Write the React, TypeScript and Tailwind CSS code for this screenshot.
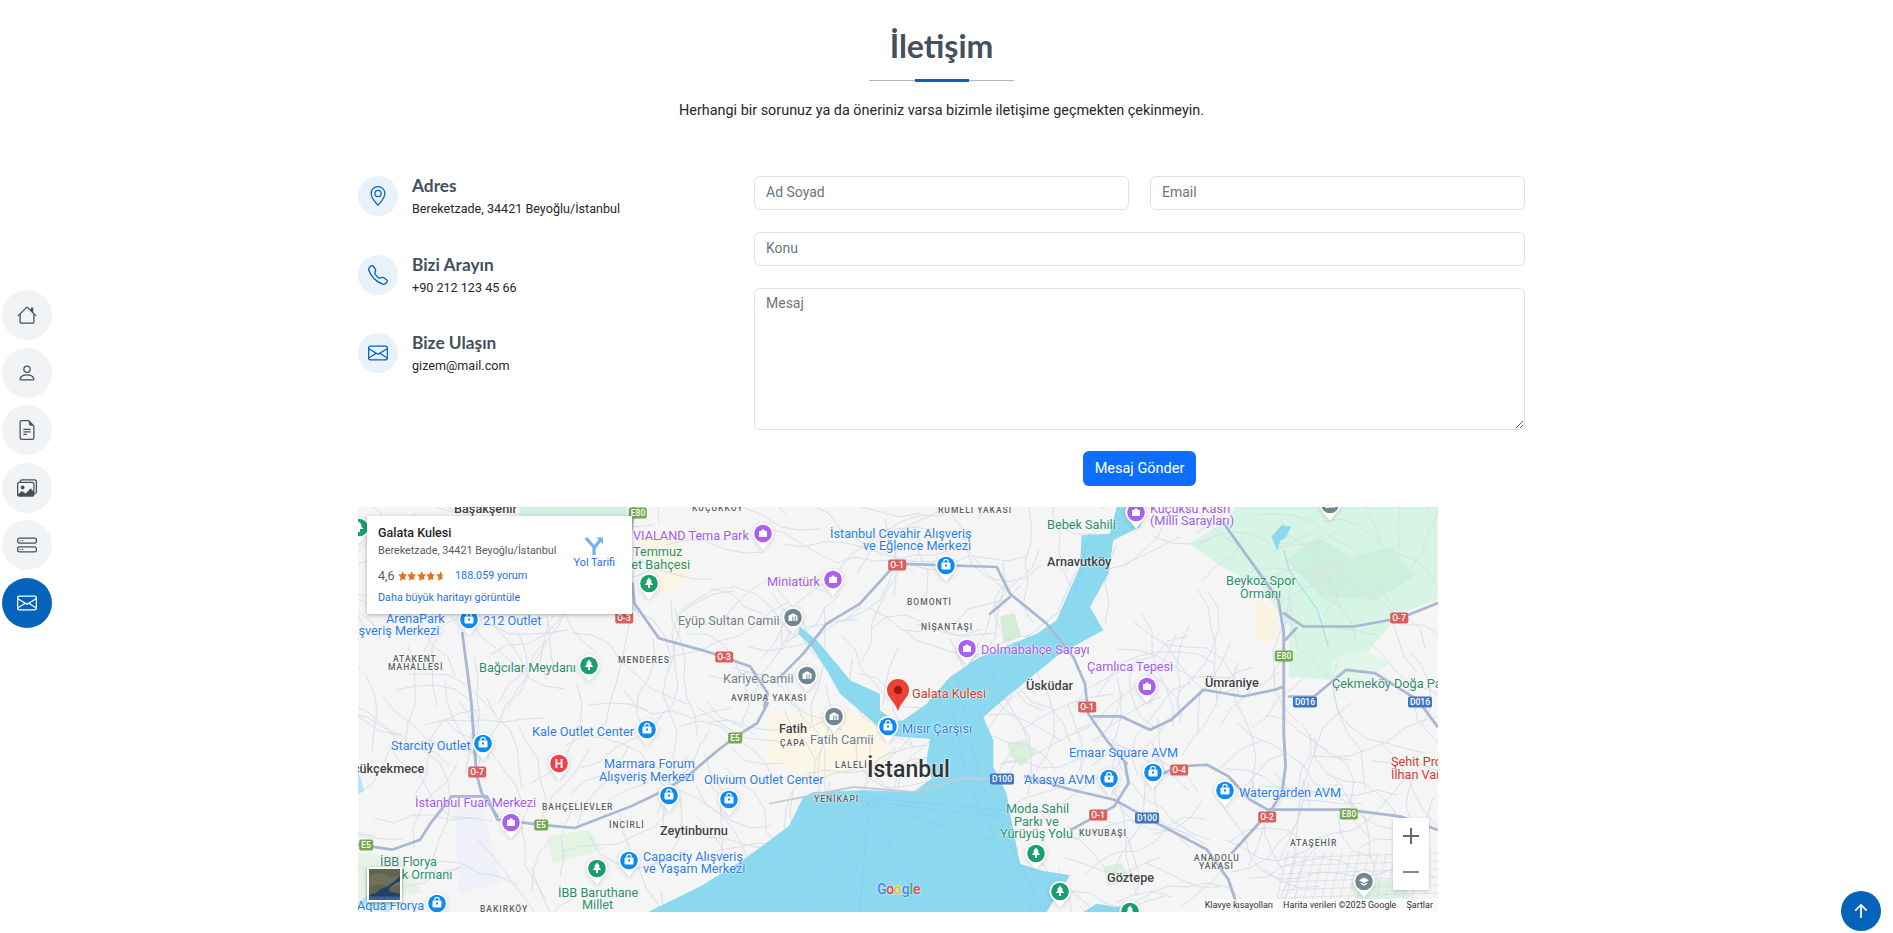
import React from 'react';
import {
  BsHouse, BsPerson, BsFileEarmarkText, BsImages, BsHddStack, BsEnvelope,
  BsGeoAlt, BsTelephone, BsArrowUpShort,
} from 'react-icons/bs';

const NAV = [
  { icon: BsHouse },
  { icon: BsPerson },
  { icon: BsFileEarmarkText },
  { icon: BsImages },
  { icon: BsHddStack },
  { icon: BsEnvelope, active: true },
];

const INFO = [
  { icon: BsGeoAlt, title: 'Adres', text: 'Bereketzade, 34421 Beyoğlu/İstanbul' },
  { icon: BsTelephone, title: 'Bizi Arayın', text: '+90 212 123 45 66' },
  { icon: BsEnvelope, title: 'Bize Ulaşın', text: 'gizem@mail.com' },
];

type Kind = 'blue' | 'purple' | 'green' | 'gray' | 'red' | 'dark' | 'small' | 'city';

const KIND_CLASS: Record<Kind, string> = {
  blue: 'text-[12.7px] text-[#2a7de9]',
  purple: 'text-[12.7px] text-[#a25ce6]',
  green: 'text-[12.7px] text-[#2c8f68]',
  gray: 'text-[12.7px] text-[#6d7f88]',
  red: 'text-[12.7px] text-[#d9352c]',
  dark: 'text-[12.7px] font-medium text-[#3f4245]',
  small: 'text-[8.5px] font-medium tracking-[1px] text-[#5a5f63]',
  city: 'text-[23px] font-medium text-[#303236]',
};

const LABELS: [number, number, string, Kind][] = [
  [96, 2, 'Başakşehir', 'dark'],
  [334, 1, 'KÜÇÜKKÖY', 'small'],
  [275, 29, 'VIALAND Tema Park', 'purple'],
  [275, 45, 'Temmuz', 'green'],
  [253, 58, 'Millet Bahçesi', 'green'],
  [409, 75, 'Miniatürk', 'purple'],
  [28, 112, 'ArenaPark', 'blue'],
  [-14, 124, 'Alışveriş Merkezi', 'blue'],
  [125, 114, '212 Outlet', 'blue'],
  [320, 114, 'Eyüp Sultan Camii', 'gray'],
  [35, 152, 'ATAKENT', 'small'],
  [30, 160, 'MAHALLESİ', 'small'],
  [260, 153, 'MENDERES', 'small'],
  [121, 161, 'Bağcılar Meydanı', 'green'],
  [365, 172, 'Kariye Camii', 'gray'],
  [373, 191, 'AVRUPA YAKASI', 'small'],
  [174, 225, 'Kale Outlet Center', 'blue'],
  [33, 239, 'Starcity Outlet', 'blue'],
  [-20, 262, 'Küçükçekmece', 'dark'],
  [421, 222, 'Fatih', 'dark'],
  [422, 236, 'ÇAPA', 'small'],
  [452, 233, 'Fatih Camii', 'gray'],
  [477, 258, 'LALELİ', 'small'],
  [246, 257, 'Marmara Forum', 'blue'],
  [241, 270, 'Alışveriş Merkezi', 'blue'],
  [346, 273, 'Olivium Outlet Center', 'blue'],
  [456, 292, 'YENİKAPI', 'small'],
  [57, 296, 'İstanbul Fuar Merkezi', 'purple'],
  [184, 300, 'BAHÇELİEVLER', 'small'],
  [251, 318, 'İNCİRLİ', 'small'],
  [302, 324, 'Zeytinburnu', 'dark'],
  [285, 350, 'Capacity Alışveriş', 'blue'],
  [285, 362, 've Yaşam Merkezi', 'blue'],
  [22, 355, 'İBB Florya', 'green'],
  [9, 368, 'Atatürk Ormanı', 'green'],
  [200, 386, 'İBB Baruthane', 'green'],
  [224, 398, 'Millet', 'green'],
  [-1, 399, 'Aqua Florya', 'blue'],
  [122, 402, 'BAKIRKÖY', 'small'],
  [580, 3, 'RUMELİ YAKASI', 'small'],
  [472, 27, 'İstanbul Cevahir Alışveriş', 'blue'],
  [505, 39, 've Eğlence Merkezi', 'blue'],
  [689, 18, 'Bebek Sahili', 'green'],
  [689, 55, 'Arnavutköy', 'dark'],
  [549, 95, 'BOMONTİ', 'small'],
  [563, 120, 'NİŞANTAŞI', 'small'],
  [623, 143, 'Dolmabahçe Sarayı', 'purple'],
  [729, 160, 'Çamlıca Tepesi', 'purple'],
  [668, 179, 'Üsküdar', 'dark'],
  [554, 187, 'Galata Kulesi', 'red'],
  [544, 222, 'Mısır Çarşısı', 'blue'],
  [509, 262, 'İstanbul', 'city'],
  [666, 273, 'Akasya AVM', 'blue'],
  [711, 246, 'Emaar Square AVM', 'blue'],
  [648, 302, 'Moda Sahil', 'green'],
  [656, 315, 'Parkı ve', 'green'],
  [642, 327, 'Yürüyüş Yolu', 'green'],
  [721, 326, 'KUYUBAŞI', 'small'],
  [749, 371, 'Göztepe', 'dark'],
  [792, 2, 'Küçüksu Kasrı', 'purple'],
  [792, 14, '(Millî Sarayları)', 'purple'],
  [868, 74, 'Beykoz Spor', 'green'],
  [882, 87, 'Ormanı', 'green'],
  [847, 176, 'Ümraniye', 'dark'],
  [974, 177, 'Çekmeköy Doğa Parkı', 'green'],
  [1033, 255, 'Şehit Prof. Dr.', 'red'],
  [1033, 268, 'İlhan Varank', 'red'],
  [881, 286, 'Watergarden AVM', 'blue'],
  [932, 336, 'ATAŞEHİR', 'small'],
  [836, 351, 'ANADOLU', 'small'],
  [841, 359, 'YAKASI', 'small'],
];

type PinType = 'shop' | 'tree' | 'purple' | 'museum' | 'hospital' | 'school';

const PINS: [number, number, PinType][] = [
  [291, 77, 'tree'], [231, 159, 'tree'], [239, 362, 'tree'], [1, 21, 'tree'], [678, 347, 'tree'], [702, 385, 'tree'], [772, 405, 'tree'],
  [111, 113, 'shop'], [289, 223, 'shop'], [125, 237, 'shop'], [311, 289, 'shop'], [371, 293, 'shop'], [271, 354, 'shop'], [79, 397, 'shop'],
  [588, 59, 'shop'], [530, 220, 'shop'], [751, 272, 'shop'], [795, 266, 'shop'], [867, 284, 'shop'],
  [405, 27, 'purple'], [475, 73, 'purple'], [153, 316, 'purple'], [609, 142, 'purple'], [778, 6, 'purple'], [789, 180, 'purple'],
  [435, 111, 'museum'], [449, 169, 'museum'], [476, 210, 'museum'], [972, -2, 'museum'],
  [201, 257, 'hospital'], [1006, 375, 'school'],
];

const PIN_COLOR: Record<PinType, string> = {
  shop: '#0b8af5', tree: '#1b9e6e', purple: '#ab5ff0', museum: '#6f8792', hospital: '#f0404f', school: '#6f8792',
};

type ShieldKind = 'red' | 'blue' | 'green';

const SHIELD_CLASS: Record<ShieldKind, string> = {
  red: 'bg-[#d9605c]',
  blue: 'bg-[#3f76c4]',
  green: 'bg-[#74a84f]',
};

const SHIELDS: [number, number, string, ShieldKind][] = [
  [280, 6, 'E80', 'green'], [266, 111, 'O-3', 'red'], [366, 150, 'O-3', 'red'], [377, 231, 'E5', 'green'],
  [119, 265, 'O-7', 'red'], [183, 318, 'E5', 'green'], [8, 338, 'E5', 'green'], [539, 58, 'O-1', 'red'],
  [644, 272, 'D100', 'blue'], [729, 200, 'O-1', 'red'], [740, 308, 'O-1', 'red'], [821, 263, 'O-4', 'red'],
  [789, 311, 'D100', 'blue'], [909, 310, 'O-2', 'red'], [991, 307, 'E80', 'green'], [926, 149, 'E80', 'green'],
  [947, 195, 'D016', 'blue'], [1062, 195, 'D016', 'blue'], [1041, 111, 'O-7', 'red'],
];

// thin street net, seeded so the picture stays the same between runs
const makeStreets = () => {
  let seed = 7;
  const rnd = () => {
    seed = (seed * 16807) % 2147483647;
    return seed / 2147483647;
  };
  const lines: string[] = [];
  for (let i = 0; i < 340; i++) {
    let x = rnd() * 1080;
    let y = rnd() * 405;
    let a = rnd() * Math.PI * 2;
    const pts = [`${x.toFixed(0)},${y.toFixed(0)}`];
    const steps = 3 + Math.floor(rnd() * 5);
    for (let s = 0; s < steps; s++) {
      a += (rnd() - 0.5) * 1.2;
      x += Math.cos(a) * 20;
      y += Math.sin(a) * 20;
      pts.push(`${x.toFixed(0)},${y.toFixed(0)}`);
    }
    lines.push(pts.join(' '));
  }
  return lines;
};

const STREETS = makeStreets();

const PinGlyph = ({ type }: { type: PinType }) => {
  if (type === 'shop') {
    return (
      <g>
        <rect x="6.5" y="7.5" width="9" height="7" rx="1" fill="#fff" />
        <path d="M8.800 7.500V6.600a2.200 2.200 0 0 1 4.400 0v.9" fill="none" stroke="#fff" strokeWidth="1.200" />
        <rect x="10" y="9.500" width="2" height="2" fill="#0b8af5" />
      </g>
    );
  }
  if (type === 'tree') {
    return <path d="M11 4.500l3 4h-1.400l2.600 3.600h-3.200V15h-2v-2.900H6.800l2.600-3.600H8z" fill="#fff" />;
  }
  if (type === 'purple') {
    return <path d="M7 8h2l1-1.500h2L13 8h2v6H7z" fill="#fff" />;
  }
  if (type === 'museum') {
    return <path d="M6.500 14V8.800L11 6.200l4.500 2.600V14h-1.800V9.500h-1V14h-1.400V9.500h-1V14z" fill="#fff" />;
  }
  if (type === 'school') {
    return <path d="M11 6.500l5 2.700-5 2.700-5-2.700zM7.800 11.600L11 13.300l3.200-1.700V13L11 14.800 7.800 13z" fill="#fff" />;
  }
  return (
    <text x="11" y="14.500" textAnchor="middle" fontSize="12" fontWeight="700" fill="#fff" fontFamily="Roboto, sans-serif">H</text>
  );
};

const Pin = ({ x, y, type }: { x: number; y: number; type: PinType }) => (
  <svg
    viewBox="0 0 22 27"
    className="absolute h-[27px] w-[22px] -translate-x-1/2 -translate-y-[11px] drop-shadow-sm"
    style={{ left: x, top: y }}
  >
    <path d="M11 0a10.600 10.600 0 0 1 10.600 10.600c0 5-4 8-10.600 16C4.400 18.600.4 15.600.4 10.600A10.600 10.600 0 0 1 11 0z" fill="#fff" />
    <circle cx="11" cy="10.500" r="8.800" fill={PIN_COLOR[type]} />
    <PinGlyph type={type} />
  </svg>
);

const MapArt = () => (
  <svg viewBox="0 0 1080 405" className="absolute inset-0 h-full w-full">
    <rect width="1080" height="405" fill="#f5f5f6" />

    {/* parks and built up patches */}
    <g transform="translate(542 -7) scale(0.357 0.333)">
      <path d="M810 130L920 60 940 20H1505V300L1400 340 1300 470 1200 540 1090 530 1090 380 1010 260 900 200z" fill="#d6f5e4" />
      <path d="M1080 180l90-70 90 60 120-30 60 90-110 70-150-10z" fill="#cdf0dc" />
      <path d="M1210 480l90-30 70 40-80 60-80 10z" fill="#e2f6ea" />
      <path d="M1000 300l50 30 15 70-50 40-25-60z" fill="#fbf3e2" />
      <path d="M300 730l50-10 30 40-40 40-30-30z" fill="#dcefd9" />
      <path d="M280 350l40-10 20 70-50 20z" fill="#d4eed6" />
      <path d="M570 1100l50-10 30 50-70 20z" fill="#dcf1dd" />
      <path d="M1260 1150l120-10 60 50-160 20z" fill="#dcf3e2" />
    </g>
    <g transform="translate(-8 -7) scale(0.351 0.333)">
      <path d="M480 20H790V60L700 90H500z" fill="#d2f1df" />
      <path d="M560 1010l120-20 40 60-140 40z" fill="#e3f4e3" />
      <path d="M300 920l80 10 50 220-120 30z" fill="#f0f1f8" />
      <path d="M820 100l120 20 40 120-100 40z" fill="#fbf5e4" />
      <path d="M1190 640h300l60 140-200 60-160-50z" fill="#fcf6e6" />
      <path d="M23 1060l120 10 60 110-180 20z" fill="#e4f3e6" />
    </g>

    {/* minor streets, water goes over them */}
    <g fill="none" stroke="#d8dfe9" strokeWidth="1" strokeLinejoin="round">
      {STREETS.map((d, i) => (
        <polyline key={i} points={d} />
      ))}
    </g>
    {/* Atasehir street grid */}
    <g transform="translate(930 345)" stroke="#d5dae3" strokeWidth="0.7">
      {[0, 9, 18, 27, 36, 45, 54, 63, 72, 81, 90, 99, 108, 117, 126, 135].map((v) => (
        <line key={v} x1={v} y1="0" x2={v - 12} y2="50" />
      ))}
      {[6, 14, 22, 30, 38, 46].map((v) => (
        <line key={v} x1="-10" y1={v} x2="150" y2={v - 5} />
      ))}
    </g>

    {/* Omerli lake and its stream */}
    <g transform="translate(542 -7) scale(0.357 0.333)">
      <path d="M1040 110l30-35 25 5-12 30-18 12-8 30-10-25z" fill="#8cd9ef" />
      <path d="M1075 150l15 60 80 120 30 110" fill="none" stroke="#9fdcef" strokeWidth="3" />
    </g>

    {/* Marmara, Bosphorus and Golden Horn */}
    <g transform="translate(422 0) scale(0.3333)" fill="#8cd9ef">
      <path d="M-396 1215L-237 1137-102 1053 27 957 70 870 100 855 250 850 400 855 455 815 440 760 450 695 370 690 300 680 290 650 370 640 440 590 510 510 600 450 770 380 830 340 860 270 900 180 905 85 990 80 1010 0H1100L1080 60 1000 100 985 200 930 300 970 370 840 440 680 570 610 630 640 700 640 780 680 860 700 970 720 1070 780 1090 870 1105 800 1215z" />
      <path d="M60 360L110 400 170 470 210 520 300 560 300 610 340 640 290 655 250 620 180 560 140 490 95 420 55 380z" />
      <path d="M910 1215l40-25 60 10 40-5-10 20z" />
    </g>
    <g transform="translate(422 0) scale(0.3333)" fill="none" stroke="#6fc8e4" strokeWidth="2" strokeDasharray="7 5">
      <path d="M265 890L-100 1090M265 890L60 1215M265 890L240 1215M265 890L430 1215M265 890L640 1000" />
      <path d="M230 880L660 930M230 870L680 910" />
      <path d="M500 520L560 820 760 1215M530 510L600 820 790 1215M620 470L670 570 500 720" />
      <path d="M930 80L880 280 640 470" />
    </g>
    <path d="M-8 400l28-18 22 8-12 15zM-8 268h10l4 16-14 8z" fill="#b5e6f3" />

    {/* highways */}
    <g transform="translate(-8 -7) scale(0.351 0.333)" fill="none" stroke="#a8b7d4" strokeWidth="8" strokeLinejoin="round" strokeLinecap="round">
      <path d="M320 400L345 600 360 820 375 880 420 950" />
      <path d="M23 1035L120 1050 200 1020 230 970 290 890 390 890 420 960 540 975 640 985 800 920 900 870 960 830 1050 750 1100 710 1160 670 1190 610" />
      <path d="M805 250L810 310 880 415 1000 450 1060 470 1140 500 1190 580 1180 620" />
      <path d="M810 20L800 100" />
    </g>
    <g transform="translate(422 0) scale(0.3333)" fill="none" stroke="#a8b7d4" strokeWidth="8" strokeLinejoin="round" strokeLinecap="round">
      <path d="M0 510L70 440 140 350 240 290 330 190 350 170 650 180 690 260 800 350 880 450 915 530 925 620 980 700 1040 770" />
      <path d="M690 270L630 320" />
      <path d="M-30 890L220 840 400 855 540 815 640 815" stroke="#c4cad3" strokeWidth="6" />
    </g>
    <g transform="translate(542 -7) scale(0.357 0.333)" fill="none" stroke="#a8b7d4" strokeWidth="8" strokeLinejoin="round" strokeLinecap="round">
      <path d="M540 650L620 650 700 690 760 660 850 570 960 590 1050 570 1075 560" />
      <path d="M900 60L1060 300 1075 400V700L1080 800 1070 880 1040 930 930 1060" />
      <path d="M1075 340L1130 380H1270L1400 355 1505 310" />
      <path d="M1080 420L1110 385" />
      <path d="M1090 590H1160L1250 510 1330 520 1450 600 1505 680" />
      <path d="M700 840L780 800 860 795 920 830 980 900 1030 930H1250L1400 950 1505 990" />
      <path d="M350 830L480 870 600 900 700 960 860 1050 920 1140 950 1236" />
      <path d="M630 790L640 850 600 920 480 990" />
    </g>

    {/* red marker */}
    <g transform="translate(529 172)">
      <path d="M11 0a11 11 0 0 1 11 11c0 7.500-7 10-11 21C7 21 0 18.500 0 11A11 11 0 0 1 11 0z" fill="#ea4335" />
      <circle cx="11" cy="11" r="4" fill="#a51410" />
    </g>
  </svg>
);

const Star = ({ id, fill }: { id: string; fill: number }) => (
  <svg viewBox="0 0 10 10" className="h-[9.500px] w-[9.500px]">
    <defs>
      <linearGradient id={id}>
        <stop offset={fill} stopColor="#e7711b" />
        <stop offset={fill} stopColor="#d5d5d5" />
      </linearGradient>
    </defs>
    <path d="M5 .3l1.450 3 3.250.4-2.400 2.250.65 3.300L5 8.600 2.050 10.250l.65-3.300L.3 3.700l3.250-.4z" fill={`url(#${id})`} />
  </svg>
);

const PlaceCard = () => (
  <div className="absolute left-[9px] top-[9px] flex h-[98px] w-[265px] justify-between bg-white pl-[11px] pr-[17px] pt-[8px] whitespace-nowrap shadow-[0_1px_4px_rgba(0,0,0,0.3)]">
    <div>
      <div className="text-[12.5px] font-medium leading-[18px] text-[#1f1f1f]">Galata Kulesi</div>
      <div className="mt-[1px] text-[10.8px] leading-[16px] text-[#5b5b5b]">Bereketzade, 34421 Beyoğlu/İstanbul</div>
      <div className="mt-[8px] flex items-center leading-[18px]">
        <span className="mr-[3px] text-[12.5px] text-[#5b5b5b]">4,6</span>
        <span className="flex">
          <Star id="s1" fill={1} />
          <Star id="s2" fill={1} />
          <Star id="s3" fill={1} />
          <Star id="s4" fill={1} />
          <Star id="s5" fill={0.6} />
        </span>
        <span className="ml-[10px] text-[10.8px] text-[#1a73e8]">188.059 yorum</span>
      </div>
      <div className="mt-[5px] text-[10.8px] leading-[16px] text-[#1a73e8]">Daha büyük haritayı görüntüle</div>
    </div>
    <div className="flex flex-col items-center pt-[10px]">
      <svg viewBox="0 0 22 22" className="h-[22px] w-[22px]" fill="none" stroke="#7aaeee" strokeWidth="3.200">
        <path d="M11 21V13L3 4" />
        <path d="M11 14L18 5" />
        <path d="M13.500 3.500H20V10z" fill="#7aaeee" strokeWidth="0" />
      </svg>
      <span className="mt-[-1px] text-[10.8px] leading-[16px] text-[#1a73e8]">Yol Tarifi</span>
    </div>
  </div>
);

const GoogleMap = () => (
  <div className="relative h-[405px] w-[1080px] overflow-hidden font-['Roboto',sans-serif]">
    <MapArt />

    {LABELS.map(([x, y, text, kind]) => (
      <span
        key={`${text}-${x}`}
        className={`absolute -translate-y-1/2 whitespace-nowrap leading-none [text-shadow:0_0_2px_#fff,0_0_2px_#fff] ${KIND_CLASS[kind]}`}
        style={{ left: x, top: y }}
      >
        {text}
      </span>
    ))}

    {SHIELDS.map(([x, y, text, kind]) => (
      <span
        key={`${text}-${x}`}
        className={`absolute -translate-x-1/2 -translate-y-1/2 rounded-[2px] px-[2px] text-[8.500px] font-medium leading-[11px] text-white ${SHIELD_CLASS[kind]}`}
        style={{ left: x, top: y }}
      >
        {text}
      </span>
    ))}

    {PINS.map(([x, y, type]) => (
      <Pin key={`${x}-${y}`} x={x} y={y} type={type} />
    ))}

    <PlaceCard />

    {/* satellite thumbnail */}
    <div className="absolute left-[9px] top-[360px] h-[35px] w-[35px] overflow-hidden border-2 border-white shadow-[0_1px_3px_rgba(0,0,0,0.4)]">
      <svg viewBox="0 0 35 35" className="h-full w-full">
        <rect width="35" height="35" fill="#5f6650" />
        <path d="M0 8l12-4 14 6 9-2v10l-12 3-10-4-13 3z" fill="#6f7259" />
        <path d="M35 8L28 14 20 20 14 22 8 27 0 29V35H35V28L24 26 22 22 30 16 35 14z" fill="#23406a" />
        <path d="M0 31h35v4H0z" fill="#3a5f99" />
      </svg>
    </div>

    <div className="absolute left-[519px] top-[375px] text-[14px] font-medium leading-none tracking-[-0.2px] [text-shadow:0_0_2px_#fff]">
      <span className="text-[#4285f4]">G</span>
      <span className="text-[#ea4335]">o</span>
      <span className="text-[#fbbc05]">o</span>
      <span className="text-[#4285f4]">g</span>
      <span className="text-[#34a853]">l</span>
      <span className="text-[#ea4335]">e</span>
    </div>

    {/* zoom control */}
    <div className="absolute left-[1035px] top-[311px] flex h-[72px] w-[36px] flex-col items-center justify-around bg-white shadow-[0_1px_3px_rgba(0,0,0,0.2)]">
      <svg viewBox="0 0 16 16" className="h-[16px] w-[16px]" fill="#666">
        <path d="M7 0h2v7h7v2H9v7H7V9H0V7h7z" />
      </svg>
      <svg viewBox="0 0 16 16" className="h-[16px] w-[16px]" fill="#888">
        <path d="M0 7h16v2H0z" />
      </svg>
    </div>

    {/* attribution strip */}
    <div className="absolute bottom-0 right-0 flex h-[13px] items-center bg-white/60 text-[9px] leading-none text-[#333]">
      <span className="px-[5px]">Klavye kısayolları</span>
      <span className="px-[5px]">Harita verileri ©2025 Google</span>
      <span className="px-[5px]">Şartlar</span>
    </div>
  </div>
);

const fieldClass =
  'block w-full rounded-[6px] border border-[#dee2e6] bg-white px-[11px] text-[14px] leading-[21px] text-[#212529] placeholder:text-[#6c757d] outline-none';

const App = () => {
  return (
    <div className="relative min-h-[933px] bg-white font-['Roboto',sans-serif] text-[#272829]">
      <nav className="fixed left-[2px] top-[290px] flex flex-col gap-[7.600px]">
        {NAV.map(({ icon: Icon, active }, i) => (
          <a
            key={i}
            href="#"
            className={
              active
                ? 'flex h-[50px] w-[50px] items-center justify-center rounded-full bg-[#0563bb] text-white'
                : 'flex h-[50px] w-[50px] items-center justify-center rounded-full bg-[#f2f3f5] text-[#45505b]'
            }
          >
            <Icon size={20} />
          </a>
        ))}
      </nav>

      <section className="ml-[358px] w-[1167px] pb-[21px] pt-[27px]">
        <div className="flex flex-col items-center">
          <h2 className="font-['Lato',sans-serif] text-[32px] font-bold leading-[38px] text-[#45505b]">İletişim</h2>
          <div className="relative mt-[15px] h-px w-[145px] bg-[#b5b8bb]">
            <div className="absolute left-[46px] top-[-1px] h-[3px] w-[54px] bg-[#0563bb]" />
          </div>
          <p className="mt-[20px] text-[14.400px] leading-[20px]">
            Herhangi bir sorunuz ya da öneriniz varsa bizimle iletişime geçmekten çekinmeyin.
          </p>
        </div>

        <div className="mt-[55px] flex">
          <div className="flex w-[396px] flex-col gap-[34.500px]">
            {INFO.map(({ icon: Icon, title, text }) => (
              <div key={title} className="flex h-[44px] gap-[14px]">
                <div className="flex h-[40px] w-[40px] items-center justify-center rounded-full bg-[#e9f2fa] text-[#0563bb]">
                  <Icon size={20} />
                </div>
                <div>
                  <h4 className="font-['Lato',sans-serif] text-[17.300px] font-bold leading-[20px] text-[#45505b]">{title}</h4>
                  <p className="mt-[3px] text-[12.600px] leading-[20px]">{text}</p>
                </div>
              </div>
            ))}
          </div>

          <form className="flex w-[771px] flex-col gap-[22px]">
            <div className="grid grid-cols-2 gap-[21px]">
              <input className={`${fieldClass} h-[34px] pb-[2px]`} placeholder="Ad Soyad" />
              <input className={`${fieldClass} h-[34px] pb-[2px]`} placeholder="Email" />
            </div>
            <input className={`${fieldClass} h-[34px] pb-[2px]`} placeholder="Konu" />
            <textarea className={`${fieldClass} h-[142px] py-[4px]`} placeholder="Mesaj" />
            <div className="-mt-[1px] flex justify-center">
              <button type="button" className="h-[35px] w-[113px] rounded-[6px] bg-[#0d6efd] text-[14.500px] text-white">
                Mesaj Gönder
              </button>
            </div>
          </form>
        </div>

        <div className="mt-[21px]">
          <GoogleMap />
        </div>
      </section>

      <a href="#" className="fixed bottom-[2px] right-[12px] flex h-[40px] w-[40px] items-center justify-center rounded-full bg-[#0563bb] text-white">
        <BsArrowUpShort size={28} />
      </a>
    </div>
  );
};

export default App;
